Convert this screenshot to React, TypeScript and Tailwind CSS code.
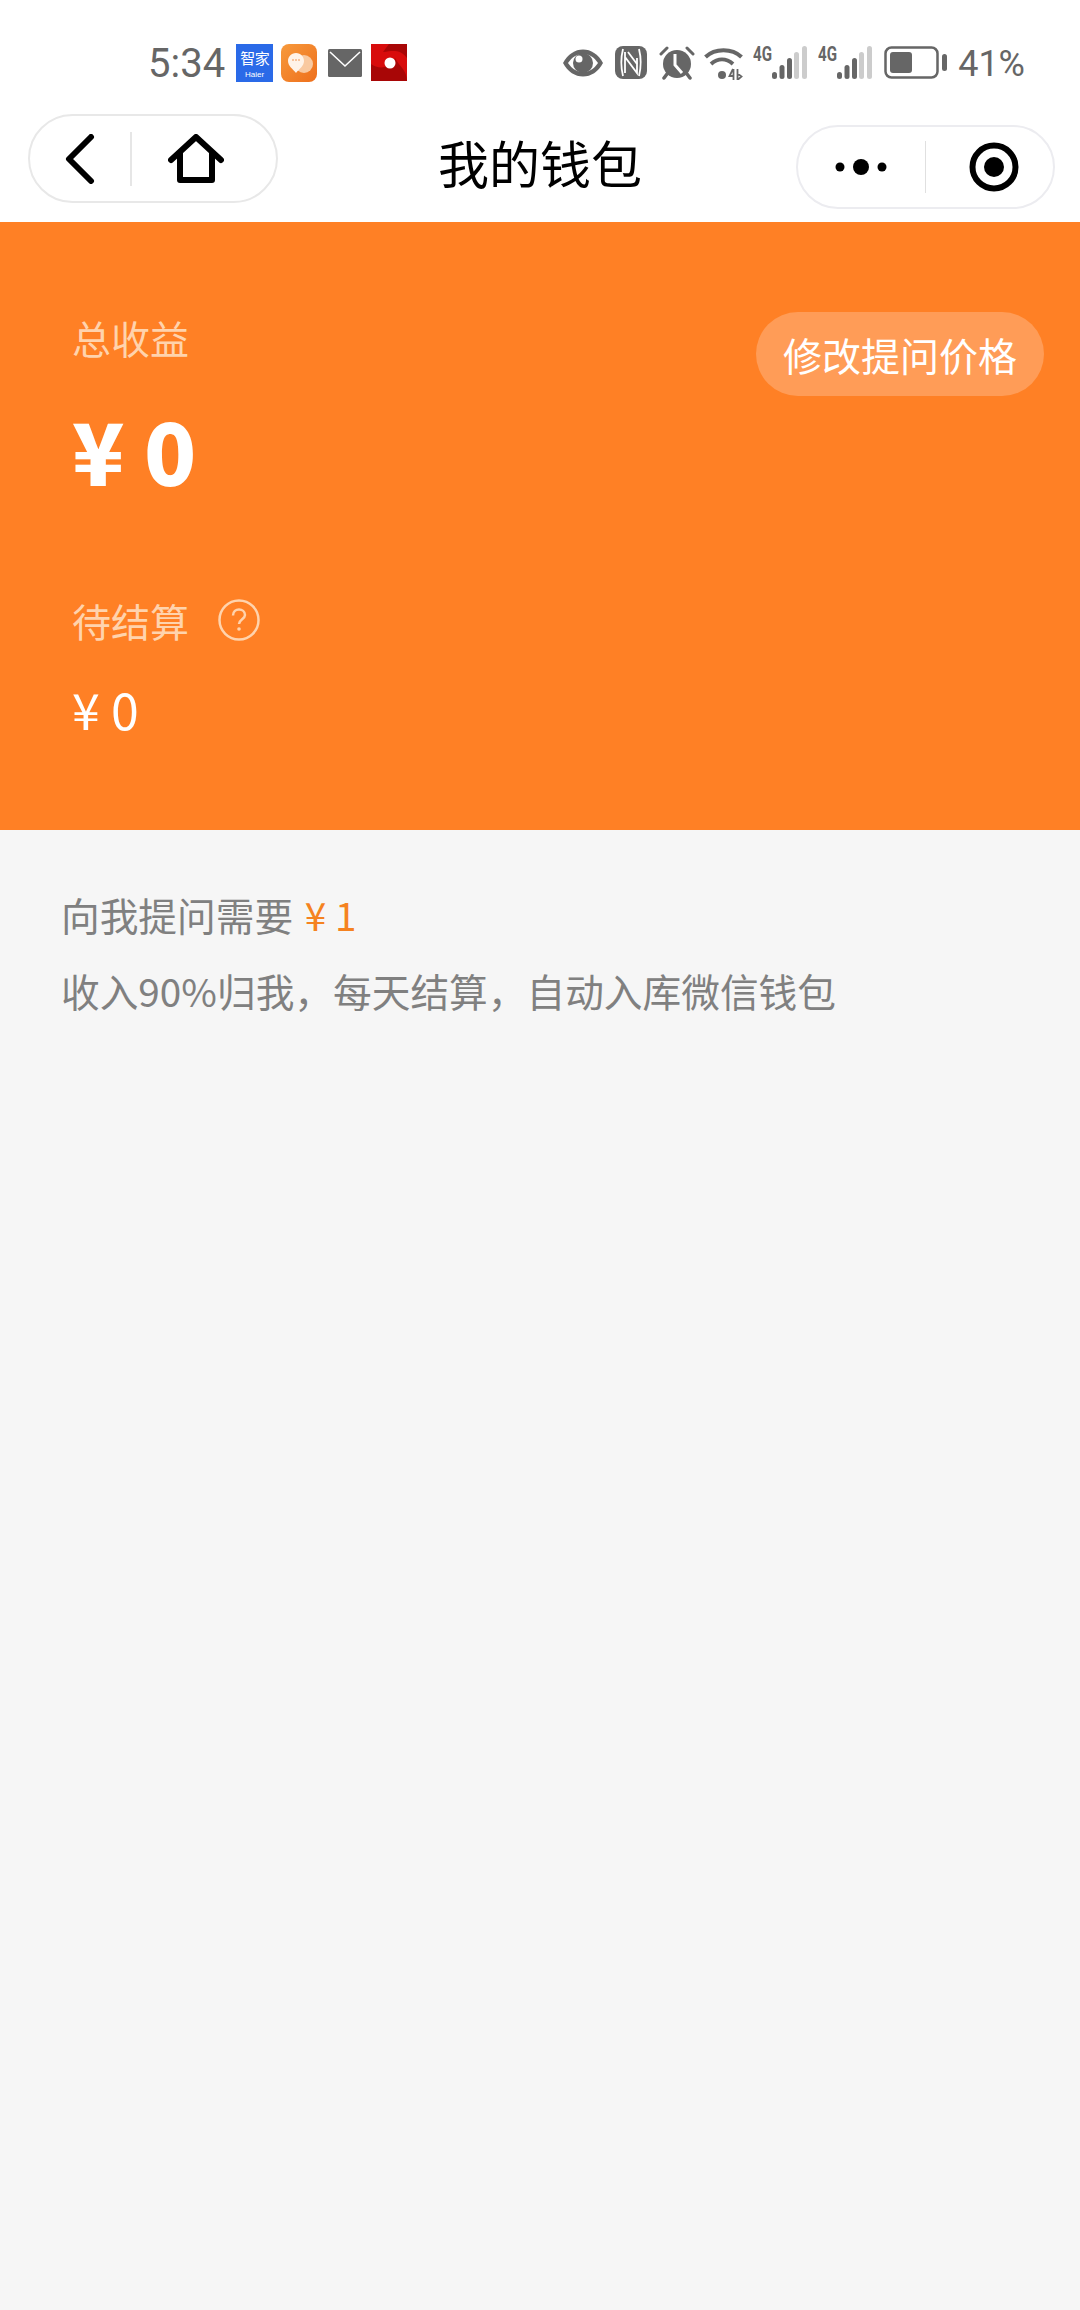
const cjk = "font-['Noto_Sans_CJK_SC','Noto_Sans',sans-serif]";

const Eye = () => (
  <svg width="42" height="30" viewBox="0 0 42 30" className="text-[#666]">
    <path d="M1 15C6 6 13 1.500 21 1.500S36 6 41 15c-5 9-12 13.500-20 13.500S6 24 1 15Z" fill="currentColor" />
    <path d="M6 15c4-6 9-9 15-9s11 3 15 9c-4 6-9 9-15 9S10 21 6 15Z" fill="#fff" />
    <circle cx="21" cy="15" r="10" fill="currentColor" />
    <circle cx="17" cy="11" r="3.500" fill="#fff" />
  </svg>
);

const Nfc = () => (
  <svg width="32" height="33" viewBox="0 0 32 33" className="text-[#666]">
    <rect width="32" height="33" rx="8" fill="currentColor" />
    <path d="M8 3c-2 8-2 19 0 27M24 3c2 8 2 19 0 27" fill="none" stroke="#fff" strokeWidth="1.800" />
    <path d="M10 6v5l12 16V22M22 27V12M10 11v16" fill="none" stroke="#fff" strokeWidth="1.800" />
    <path d="M13 6l9 12" fill="none" stroke="#fff" strokeWidth="1.800" />
  </svg>
);

const Alarm = () => (
  <svg width="36" height="34" viewBox="0 0 36 34" className="text-[#666]">
    <circle cx="18" cy="18" r="14" fill="currentColor" />
    <path d="M2 8l6-6M34 8l-6-6" stroke="currentColor" strokeWidth="3" strokeLinecap="round" />
    <path d="M8 28l-3 4M28 28l3 4" stroke="currentColor" strokeWidth="3.500" strokeLinecap="round" />
    <path d="M16 8v11l7 8" fill="none" stroke="#fff" strokeWidth="3" />
  </svg>
);

const Wifi = () => (
  <svg width="39" height="34" viewBox="0 0 39 34" className="text-[#666]">
    <path d="M1.500 11C11 2 28 2 37.500 11" fill="none" stroke="currentColor" strokeWidth="4" />
    <path d="M7 18c7-6 15-6 22 0" fill="none" stroke="currentColor" strokeWidth="4" />
    <circle cx="18" cy="29" r="4" fill="currentColor" />
    <path d="M29 23l-3.500 7h4M29.500 23v11M33.500 23v11l4-3.500-4-3" fill="none" stroke="currentColor" strokeWidth="1.800" />
  </svg>
);

const Signal = () => (
  <div className="relative w-[54px] h-[33px]">
    <span className="absolute left-0 -top-[3px] origin-left scale-x-[0.72] text-[#666] text-[21px] leading-[22px] font-bold font-['Roboto',sans-serif]">4G</span>
    <svg width="54" height="33" viewBox="0 0 54 33" className="absolute inset-0">
      <rect x="19" y="26" width="5" height="7" rx="2.500" fill="#666" />
      <rect x="26.500" y="19" width="5" height="14" rx="2.500" fill="#666" />
      <rect x="34" y="12" width="5" height="21" rx="2.500" fill="#666" />
      <rect x="41" y="6" width="5" height="27" rx="2.500" fill="#ccc" />
      <rect x="49" y="0" width="5" height="33" rx="2.500" fill="#ccc" />
    </svg>
  </div>
);

const Battery = () => (
  <svg width="63" height="33" viewBox="0 0 63 33" className="text-[#666]">
    <rect x="1.500" y="1.500" width="52" height="30" rx="6" fill="none" stroke="currentColor" strokeWidth="2.500" />
    <rect x="6" y="6" width="22" height="21" rx="3" fill="currentColor" />
    <rect x="58" y="8" width="5" height="17" rx="2.500" fill="currentColor" />
  </svg>
);

const NotifyIcons = () => (
  <div className="flex items-center ml-[11px]">
    <div className="w-[37px] h-[38px] bg-[#2a6ae8] flex flex-col items-center text-white">
      <span className={`${cjk} text-[15px] leading-[16px] mt-[6px] tracking-[-0.5px] whitespace-nowrap`}>智家</span>
      <span className="font-['Liberation_Sans',sans-serif] text-[8px] leading-[8px] mt-[5px]">Haier</span>
    </div>
    <svg width="36" height="38" viewBox="0 0 36 38" className="ml-[8px]">
      <defs>
        <linearGradient id="bub" x1="0" y1="0" x2="1" y2="1">
          <stop offset="0" stopColor="#f79a3c" />
          <stop offset="1" stopColor="#ee6f1c" />
        </linearGradient>
      </defs>
      <rect width="36" height="38" rx="8" fill="url(#bub)" />
      <circle cx="23" cy="20" r="9" fill="#f9c9a0" />
      <path d="M15 9c5 0 8 4 8 8 0 5-5 8-8 12-3-4-8-7-8-12 0-4 3-8 8-8Z" fill="#fff3e8" />
      <circle cx="12" cy="16" r="0.800" fill="#f08a3c" />
      <circle cx="15" cy="16" r="0.800" fill="#f08a3c" />
      <circle cx="18" cy="16" r="0.800" fill="#f08a3c" />
    </svg>
    <svg width="34" height="28" viewBox="0 0 34 28" className="ml-[11px]">
      <rect width="34" height="28" rx="1.500" fill="#666" />
      <path d="M2 3l15 14L32 3" fill="none" stroke="#fff" strokeWidth="1.600" />
    </svg>
    <svg width="36" height="37" viewBox="0 0 36 37" className="ml-[9px]">
      <rect width="36" height="37" fill="#d80c0c" />
      <path d="M0 37V20C8 26 20 24 24 14 28 22 36 26 36 37Z" fill="#a80606" />
      <path d="M18 0h18v14C30 6 24 6 12 8Z" fill="#a80606" />
      <circle cx="19" cy="19" r="5.500" fill="#fff" />
    </svg>
  </div>
);

const StatusBar = () => (
  <div className="h-[45px] flex items-center justify-between pl-[148px] pr-[55px]">
    <div className="flex items-center">
      <span className="font-['Roboto',sans-serif] text-[#666] text-[40px] leading-none mt-[2px]">5:34</span>
      <NotifyIcons />
    </div>
    <div className="flex items-center">
      <Eye />
      <div className="ml-[11px]"><Nfc /></div>
      <div className="ml-[12px]"><Alarm /></div>
      <div className="ml-[9px]"><Wifi /></div>
      <div className="ml-[10px]"><Signal /></div>
      <div className="ml-[11px]"><Signal /></div>
      <div className="ml-[12px]"><Battery /></div>
      <span className="ml-[11px] font-['Roboto',sans-serif] text-[#666] text-[36px] leading-none mt-[2px]">41%</span>
    </div>
  </div>
);

const NavBar = () => (
  <div className="flex items-start pl-[28px] pr-[25px] pt-[29px]">
    <div className="w-[250px] h-[89px] border-2 border-[#e8e8e8] rounded-full flex items-center">
      <svg width="30" height="50" viewBox="0 0 30 50" className="ml-[35px]">
        <path d="M26 3L4 25l22 22" fill="none" stroke="#000" strokeWidth="6" strokeLinecap="round" strokeLinejoin="round" />
      </svg>
      <div className="w-[2px] h-[54px] bg-[#e6e6e6] ml-[35px]" />
      <svg width="56" height="50" viewBox="0 0 56 50" className="ml-[36px]">
        <path d="M3 26L28 3l25 23" fill="none" stroke="#000" strokeWidth="6" strokeLinecap="round" strokeLinejoin="round" />
        <path d="M12 19v27h32V19" fill="none" stroke="#000" strokeWidth="6" strokeLinejoin="round" />
      </svg>
    </div>
    <div className={`${cjk} flex-1 text-center text-black text-[51px] leading-[60px] mt-[18px] pl-[6px]`}>我的钱包</div>
    <div className="w-[259px] h-[84px] mt-[11px] border-2 border-[#ececf0] rounded-full flex items-center">
      <svg width="52" height="20" viewBox="0 0 52 20" className="ml-[37px]">
        <circle cx="5" cy="10" r="4.500" fill="#000" />
        <circle cx="26" cy="10" r="8" fill="#000" />
        <circle cx="47" cy="10" r="4.500" fill="#000" />
      </svg>
      <div className="w-[1px] h-[52px] bg-[#e0e0e0] ml-[38px]" />
      <svg width="50" height="50" viewBox="0 0 50 50" className="ml-[43px]">
        <circle cx="25" cy="25" r="21.500" fill="none" stroke="#000" strokeWidth="6" />
        <circle cx="25" cy="25" r="10" fill="#000" />
      </svg>
    </div>
  </div>
);

export default function App() {
  return (
    <div className={`${cjk} min-h-[2310px] bg-[#f6f6f6]`}>
      <div className="bg-white h-[222px] pt-[40px]">
        <StatusBar />
        <NavBar />
      </div>
      <div className="bg-[#ff8025] h-[608px] flex justify-between items-start pl-[72px] pr-[36px] pt-[89px]">
        <div>
          <div className="text-[#ffd3ad] text-[39px] leading-[52px]">总收益</div>
          <div className="text-white text-[86px] leading-[100px] font-black mt-[36px]">¥ 0</div>
          <div className="flex items-center mt-[95px]">
            <span className="text-[#ffd3ad] text-[39px] leading-[52px]">待结算</span>
            <svg width="42" height="42" viewBox="0 0 42 42" className="ml-[29px] text-[#ffd3ad]">
              <circle cx="21" cy="21" r="19.500" fill="none" stroke="currentColor" strokeWidth="2.500" />
              <path d="M15 16.500c0-4 3-6 6-6s6 2 6 5.500c0 4-6 4.500-6 9" fill="none" stroke="currentColor" strokeWidth="2.500" />
              <circle cx="21" cy="30" r="1.800" fill="currentColor" />
            </svg>
          </div>
          <div className="text-white text-[50px] leading-[60px] mt-[32px]">¥ 0</div>
        </div>
        <button className="w-[288px] h-[84px] mt-[1px] rounded-full bg-[#ff9c57] text-white text-[39px] leading-none">修改提问价格</button>
      </div>
      <div className="pl-[61px] pt-[46px] text-[#808080] text-[38.7px] leading-[76px]">
        <div>向我提问需要 <span className="text-[#f58220] ml-[3px]">¥ 1</span></div>
        <div>收入90%归我，每天结算，自动入库微信钱包</div>
      </div>
    </div>
  );
}
